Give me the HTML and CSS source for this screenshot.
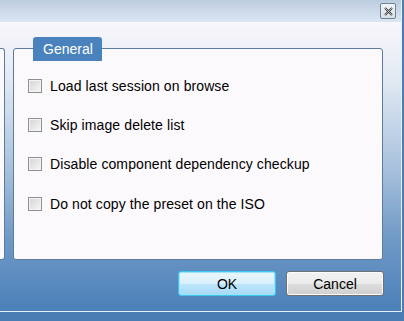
FILE: index.html
```html
<!DOCTYPE html>
<html>
<head>
<meta charset="utf-8">
<link rel="stylesheet" href="styles.css">
</head>
<body>
<div class="window">
  <div class="titlebar">
    <div class="close">
      <svg width="9" height="9" viewBox="0 0 9 9"><path d="M1 1 L8 8 M8 1 L1 8" stroke="#3a3a3a" stroke-width="2"/><path d="M1 1 L8 8 M8 1 L1 8" stroke="#ffffff" stroke-width="0.6"/></svg>
    </div>
  </div>
  <div class="content">
    <div class="panels">
      <div class="leftpanel"></div>
      <div class="group">
        <div class="tab">General</div>
        <ul class="options">
          <li class="opt"><span class="cb"></span><span class="lbl">Load last session on browse</span></li>
          <li class="opt"><span class="cb"></span><span class="lbl">Skip image delete list</span></li>
          <li class="opt"><span class="cb"></span><span class="lbl">Disable component dependency checkup</span></li>
          <li class="opt"><span class="cb"></span><span class="lbl">Do not copy the preset on the ISO</span></li>
        </ul>
      </div>
    </div>
    <div class="buttons">
      <button class="btn ok">OK</button>
      <button class="btn cancel">Cancel</button>
    </div>
  </div>
</div>
</body>
</html>
```
FILE: styles.css
```css
html, body {
  margin: 0;
  padding: 0;
}
body {
  width: 404px;
  height: 321px;
  overflow: hidden;
  background: #4a7db3;
  font-family: "Liberation Sans", Arial, sans-serif;
}
.window {
  width: 401px;
  height: 311px;
  border-right: 1px solid #e8eef6;
  border-bottom: 1px solid #e8eef6;
  display: flex;
  flex-direction: column;
}
.titlebar {
  height: 22px;
  background: linear-gradient(#bccce0, #dce6f2);
  display: flex;
  justify-content: flex-end;
  align-items: flex-start;
  padding-right: 5px;
  box-sizing: border-box;
}
.close {
  margin-top: 3px;
  width: 14px;
  height: 14px;
  border: 1px solid #6f8193;
  border-radius: 2px;
  background: linear-gradient(#f2f5f9, #d8e1ea);
  display: flex;
  align-items: center;
  justify-content: center;
}
.content {
  flex: 1;
  background: linear-gradient(#f8f6fb 0%, #e2e9f3 20%, #a9c2dd 50%, #6f99c6 75%, #4b80b9 100%);
  display: flex;
  flex-direction: column;
}
.panels {
  display: flex;
  margin-top: 15px;
  height: 223px;
}
.leftpanel {
  width: 5px;
  height: 212px;
  margin-top: 11px;
  background: #fcf9fc;
  border: 1px solid #5d7c9c;
  border-left: none;
  border-radius: 0 3px 3px 0;
  box-sizing: border-box;
}
.group {
  margin-left: 8px;
  width: 370px;
  position: relative;
  display: flex;
  flex-direction: column;
}
.tab {
  align-self: flex-start;
  margin-left: 20px;
  height: 24px;
  padding: 0 9px 0 10px;
  background: #4a82bd;
  color: #ffffff;
  font-size: 14px;
  line-height: 25px;
  border-radius: 3px 3px 0 0;
  position: relative;
  z-index: 1;
  margin-bottom: -13px;
}
.options {
  list-style: none;
  margin: 0;
  padding: 17px 0 0 14px;
  flex: 1;
  background: #fcf9fc;
  border: 1px solid #5d7c9c;
  border-radius: 3px;
}
.opt {
  display: flex;
  align-items: center;
  height: 39.4px;
}
.cb {
  width: 14px;
  height: 14px;
  box-sizing: border-box;
  border: 1px solid #8e8f8f;
  background: linear-gradient(135deg, #d3d3d3, #f7f7f7);
  box-shadow: inset 0 0 0 1px #f4f4f4;
  margin-right: 8px;
  flex: none;
}
.lbl {
  font-size: 14px;
  letter-spacing: 0.1px;
  color: #000;
}
.buttons {
  display: flex;
  justify-content: flex-end;
  gap: 10px;
  padding: 11px 17px 0 0;
}
.btn {
  width: 98px;
  height: 25px;
  font-family: "Liberation Sans", Arial, sans-serif;
  font-size: 14px;
  color: #000;
  border-radius: 3px;
  padding: 0;
}
.ok {
  border: 1px solid #3cc7f3;
  background: linear-gradient(#eaf6fd 0%, #d9f0fc 50%, #bee6fd 51%, #a7d9f5 100%);
  box-shadow: inset 0 0 0 1px #9fe3fb;
}
.cancel {
  border: 1px solid #707070;
  background: linear-gradient(#f2f2f2 0%, #ebebeb 50%, #dddddd 51%, #cfcfcf 100%);
  box-shadow: inset 0 0 0 1px #fbfbfb;
}
```
